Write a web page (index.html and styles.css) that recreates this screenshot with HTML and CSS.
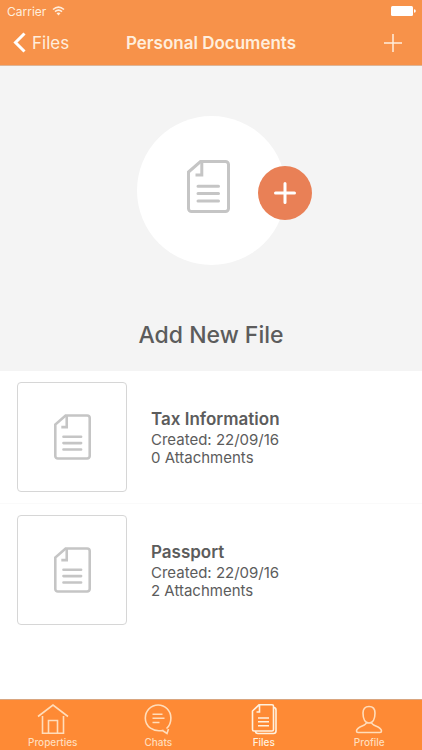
FILE: index.html
```html
<!DOCTYPE html>
<html lang="en">
<head>
    <meta charset="UTF-8">
    <title>Personal Documents</title>
    <meta name="viewport" content="width=device-width, initial-scale=1.0">
    <link rel="stylesheet" href="styles.css">
</head>
<body>
    <!-- Shared document icon -->
    <svg class="icon-defs" aria-hidden="true">
        <symbol id="icon-document" viewBox="0 0 43 53">
            <path d="M13.500 1.500H38.500a3 3 0 0 1 3 3V48.500a3 3 0 0 1-3 3H4.500a3 3 0 0 1-3-3V12Z"/>
            <path d="M14.800 2V15H8.500"/>
            <path d="M11 26.300H31.500M11 33.600H31.500M11 41H31.500" stroke-linecap="round"/>
        </symbol>
    </svg>

    <header class="top-bar">
        <div class="status-bar">
            <span class="carrier">Carrier</span>
            <svg class="wifi" viewBox="0 0 13 10" aria-hidden="true">
                <path d="M1 3.500Q6.500-1.300 12 3.500M3 5.700Q6.500 2.700 10 5.700"/>
                <path class="wifi-dot" d="M4.500 7.300Q6.500 5.700 8.500 7.300L6.500 9.500Z"/>
            </svg>
            <svg class="battery" viewBox="0 0 25 10" aria-hidden="true">
                <rect width="22" height="10" rx="1.500"/>
                <path d="M23 3.200Q24.800 3.500 24.800 5T23 6.800Z"/>
            </svg>
        </div>
        <nav class="nav-bar">
            <a class="back-link" href="#files">
                <svg class="chevron" viewBox="0 0 13 21" aria-hidden="true"><path d="M11.500 1.500 2.500 10.500 11.500 19.500"/></svg>
                Files
            </a>
            <h1 class="nav-title">Personal Documents</h1>
            <button class="add-btn" type="button" aria-label="Add">
                <svg class="add-icon" viewBox="0 0 18 18" aria-hidden="true"><path d="M9 0V18M0 9H18"/></svg>
            </button>
        </nav>
    </header>

    <main class="content">
        <section class="new-file">
            <button class="new-file-btn" type="button" aria-labelledby="new-file-title">
                <svg class="document document-large" aria-hidden="true"><use href="#icon-document"/></svg>
                <span class="plus-badge">
                    <svg class="plus-icon" viewBox="0 0 22 22" aria-hidden="true"><path d="M11 1.500V20.500M1.500 11H20.500"/></svg>
                </span>
            </button>
            <h2 class="new-file-title" id="new-file-title">Add New File</h2>
        </section>

        <ul class="file-list">
            <li class="file-item">
                <a class="file-row" href="#tax-information">
                    <span class="thumb"><svg class="document" aria-hidden="true"><use href="#icon-document"/></svg></span>
                    <span class="file-details">
                        <span class="file-name">Tax Information</span>
                        <span class="file-meta">Created: 22/09/16</span>
                        <span class="file-meta">0 Attachments</span>
                    </span>
                </a>
            </li>
            <li class="file-item">
                <a class="file-row" href="#passport">
                    <span class="thumb"><svg class="document" aria-hidden="true"><use href="#icon-document"/></svg></span>
                    <span class="file-details">
                        <span class="file-name">Passport</span>
                        <span class="file-meta">Created: 22/09/16</span>
                        <span class="file-meta">2 Attachments</span>
                    </span>
                </a>
            </li>
        </ul>
    </main>

    <nav class="tab-bar">
        <a class="tab" href="#properties">
            <svg class="tab-icon" viewBox="0 0 32 32" aria-hidden="true">
                <path d="M1 13.500 16 2 31 13.500M5.500 13V30.300H26.500V13M11.500 30V17.500H20.500V30"/>
            </svg>
            Properties
        </a>
        <a class="tab" href="#chats">
            <svg class="tab-icon" viewBox="0 0 32 32" aria-hidden="true">
                <path d="M21.500 27.200C11 29.500 3.300 23.500 3.300 15A12.800 13 0 0 1 28.900 15C28.900 20 27.500 23 24.500 25.500M20.500 27.500 25 30.500 26.500 26"/>
                <path d="M10.500 11.200H20.500M10.500 15.200H22.500M10.500 19.500H17.500"/>
            </svg>
            Chats
        </a>
        <a class="tab active" href="#files" aria-current="page">
            <svg class="tab-icon" viewBox="0 0 32 32" aria-hidden="true">
                <path d="M11 1.800H24Q25.500 1.800 25.500 3.300V26.500Q25.500 28 24 28H6Q4.500 28 4.500 26.500V8ZM11.500 2V9H8.500"/>
                <path d="M10 15H21M10 18.800H21M10 22.700H21M25.500 4.500Q28 4.500 28 7V28Q28 30.500 25.500 30.500H10Q7.500 30.500 7.500 28"/>
            </svg>
            Files
        </a>
        <a class="tab" href="#profile">
            <svg class="tab-icon" viewBox="0 0 32 32" aria-hidden="true">
                <path d="M16 3.500C20 3.500 22 6 22 10C22 15.500 20 20 16 20S10 15.500 10 10C10 6 12 3.500 16 3.500Z"/>
                <path d="M13.500 19.500C13.500 23 3.500 23 3.500 28Q3.500 29.500 5 29.500H27Q28.500 29.500 28.500 28C28.500 23 18.500 23 18.500 19.500"/>
            </svg>
            Profile
        </a>
    </nav>
</body>
</html>
```
FILE: styles.css
```css
:root {
    --orange: #F7924A;
    --tab-orange: #FE8A35;
    --coral: #E98056;
    --cream: #FFEEDD;
    --white: #FFFFFF;
    --panel: #F4F4F4;
    --text: #5C5C5C;
    --icon-gray: #C5C5C5;
    --border-gray: #D6D6D6;
}

* {
    box-sizing: border-box;
}

body {
    font-family: Inter, sans-serif;
    background: var(--white);
    margin: 0;
    color: var(--text);
    min-height: 100vh;
    display: flex;
    flex-direction: column;
}

a {
    color: inherit;
    text-decoration: none;
}

button {
    border: none;
    padding: 0;
    cursor: pointer;
}

svg {
    display: block;
    fill: none;
    stroke: currentColor;
}

.icon-defs {
    position: absolute;
    width: 0;
    height: 0;
}

.top-bar {
    background: var(--orange);
    color: var(--cream);
    border-bottom: 1px solid #DDB597;
}

.status-bar {
    display: flex;
    align-items: center;
    height: 22px;
    padding: 0 6px 0 7px;
    gap: 6px;
}

.carrier {
    font-size: 12px;
}

.wifi {
    width: 13px;
    height: 10px;
    stroke-width: 1.6;
}

.wifi-dot {
    fill: currentColor;
    stroke: none;
}

.battery {
    width: 25px;
    height: 10px;
    margin-left: auto;
    fill: var(--white);
    stroke: none;
}

.nav-bar {
    display: grid;
    grid-template-columns: 1fr auto 1fr;
    align-items: center;
    height: 43px;
    padding: 0 13px 2px;
}

.back-link {
    display: flex;
    align-items: center;
    gap: 6px;
    font-size: 17px;
}

.chevron {
    width: 13px;
    height: 21px;
    color: var(--white);
    stroke-width: 3;
}

.nav-title {
    margin: 0;
    font-size: 17px;
    font-weight: 600;
}

.add-btn {
    justify-self: end;
    padding: 0 7px;
    background: transparent;
    color: var(--cream);
}

.add-icon {
    width: 18px;
    height: 18px;
    stroke-width: 1.5;
}

.content {
    flex: 1;
}

.new-file {
    display: flex;
    flex-direction: column;
    align-items: center;
    background: var(--panel);
    padding: 50px 0 20px;
    gap: 54px;
}

.new-file-btn {
    position: relative;
    display: flex;
    align-items: center;
    justify-content: center;
    width: 149px;
    height: 149px;
    padding: 0 5px 8px 0;
    border-radius: 50%;
    background: var(--white);
}

.document {
    width: 37px;
    height: 46px;
    color: var(--icon-gray);
    stroke-width: 3;
}

.document-large {
    width: 43px;
    height: 53px;
}

/* Overlaps the right edge of the circle */
.plus-badge {
    position: absolute;
    top: 50px;
    right: -26px;
    display: flex;
    align-items: center;
    justify-content: center;
    width: 54px;
    height: 54px;
    border-radius: 50%;
    background: var(--coral);
    color: var(--white);
}

.plus-icon {
    width: 22px;
    height: 22px;
    stroke-width: 3;
    stroke-linecap: round;
}

.new-file-title {
    margin: 0;
    font-size: 23px;
    line-height: 32px;
    font-weight: 500;
}

.file-list {
    list-style: none;
    margin: 0;
    padding: 0;
}

.file-item + .file-item {
    border-top: 1px solid #FAFAFA;
}

.file-row {
    display: flex;
    align-items: center;
    gap: 24px;
    padding: 11px 17px;
}

.thumb {
    display: flex;
    align-items: center;
    justify-content: center;
    width: 110px;
    height: 110px;
    border: 1px solid var(--border-gray);
    border-radius: 4px;
}

.file-details {
    display: flex;
    flex-direction: column;
}

.file-name {
    font-size: 17px;
    line-height: 24px;
    font-weight: 600;
}

.file-meta {
    font-size: 15px;
    line-height: 18px;
}

.tab-bar {
    display: grid;
    grid-template-columns: repeat(4, 1fr);
    background: var(--tab-orange);
    border-top: 1px solid #D9A680;
    color: #FFDDBB;
}

.tab {
    display: flex;
    flex-direction: column;
    align-items: center;
    gap: 1px;
    padding: 3px 0 1px;
    font-size: 10px;
    line-height: 13px;
    font-weight: 500;
}

.tab.active {
    color: #FFF1DF;
}

.tab-icon {
    width: 32px;
    height: 32px;
    stroke-width: 1.6;
}
```
